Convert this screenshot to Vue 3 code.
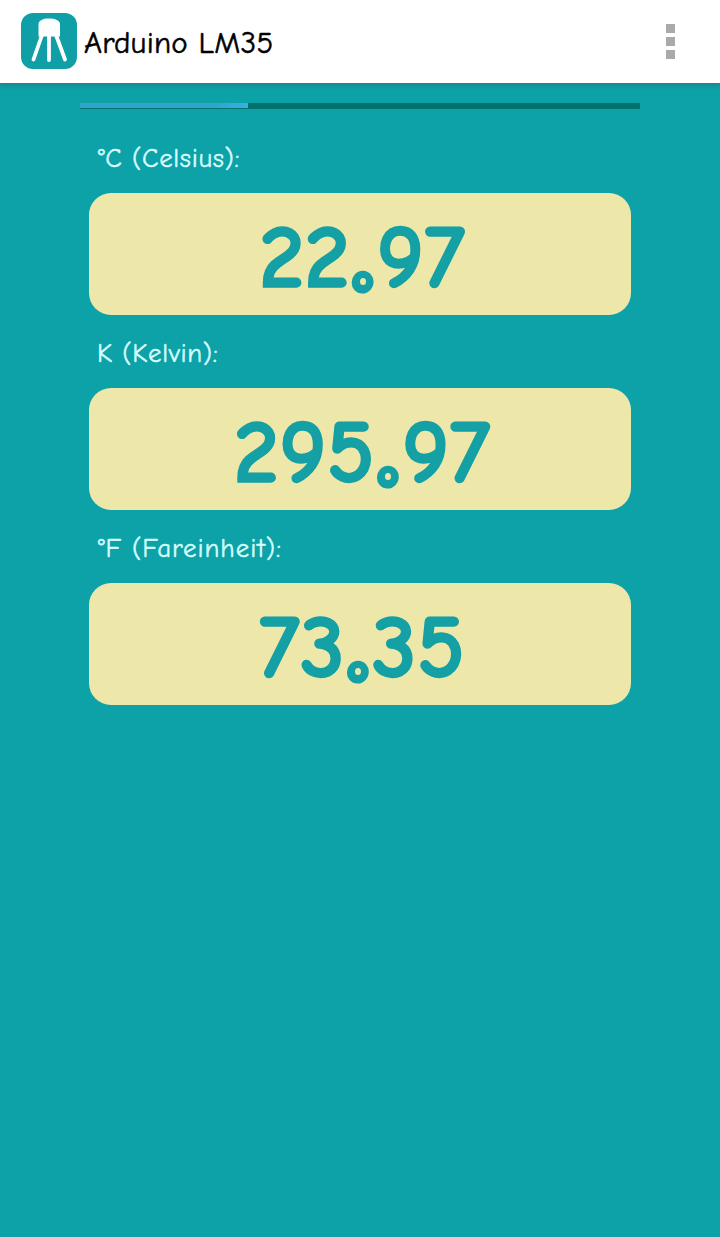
<template>
  <div class="app">
    <header class="action-bar">
      <svg class="logo" viewBox="0 0 56 56">
        <rect width="56" height="56" rx="12" fill="#109fa6" />
        <path
          d="M17.5 23.5V11C17.5 7.5 22 5.5 28 5.5S39 7.5 39 11v12.5z"
          fill="#fff"
        />
        <path
          d="M21 22L12.5 46.5M28 22V47M35 22L44 46.5"
          stroke="#fff"
          stroke-width="3.8"
          stroke-linecap="round"
        />
      </svg>
      <h1 class="title">Arduino LM35</h1>
      <div class="menu">
        <span v-for="n in 3" :key="n" class="menu-dot"></span>
      </div>
    </header>

    <main class="content">
      <div class="progress">
        <div class="progress-value" :style="{ width: progress + '%' }"></div>
      </div>

      <section v-for="item in readings" :key="item.id" class="reading">
        <p class="label" :class="item.id">{{ item.label }}</p>
        <div class="value-box">
          <span>{{ item.whole }}</span>
          <span class="point">.</span>
          <span>{{ item.decimal }}</span>
        </div>
      </section>
    </main>
  </div>
</template>

<script setup>
import { ref } from 'vue';

const progress = ref(30);

const readings = ref([
  { id: 'celsius', label: '°C (Celsius):', whole: '22', decimal: '97' },
  { id: 'kelvin', label: 'K (Kelvin):', whole: '295', decimal: '97' },
  { id: 'fahrenheit', label: '°F (Fareinheit):', whole: '73', decimal: '35' },
]);
</script>

<style>
body {
  background-color: #0da1a8;
}
</style>

<style scoped>
.app {
  min-height: 1237px;
  background-color: #0da1a8;
  font-family: 'Choco Cooky', 'Comic Sans MS', 'Comic Neue', Lato, sans-serif;
}

.action-bar {
  box-sizing: border-box;
  height: 83px;
  padding: 0 45px 1px 21px;
  display: flex;
  align-items: center;
  background-color: #fff;
  box-shadow: 0 1px 1px #397f83, 0 2px 5px rgba(20, 80, 85, 0.35);
}

.logo {
  width: 56px;
  height: 56px;
}

.title {
  margin: 0 0 0 7px;
  padding-top: 3px;
  color: #000;
  font-size: 31px;
  font-weight: 400;
  line-height: 40px;
  letter-spacing: 0.25px;
  white-space: nowrap;
  -webkit-text-stroke: 0.5px #000;
}

.menu {
  display: flex;
  flex-direction: column;
  gap: 4px;
  margin-left: auto;
}

.menu-dot {
  width: 9px;
  height: 9px;
  background-color: #aaa;
}

.content {
  padding: 20px 80px 0;
}

.progress {
  height: 6px;
  background-color: #04716f;
}

.progress-value {
  height: 5px;
  background: linear-gradient(90deg, #2fa5cb 80%, #35b2e2);
}

.reading {
  padding: 0 9px;
}

.reading:nth-of-type(1) {
  padding-top: 11px;
}

.label {
  box-sizing: border-box;
  height: 73px;
  margin: 0;
  padding: 22px 0 0 9px;
  color: #d6ffff;
  font-size: 27px;
  line-height: 34px;
  letter-spacing: 0.6px;
  white-space: nowrap;
  -webkit-text-stroke: 0.4px #d6ffff;
}

.label.kelvin {
  padding-left: 8px;
}

.label.fahrenheit {
  letter-spacing: 0.9px;
}

.value-box {
  box-sizing: border-box;
  height: 122px;
  padding: 7px 0 0 4px;
  display: flex;
  align-items: center;
  justify-content: center;
  border-radius: 22px;
  background-color: #ede8aa;
  color: #14a0a4;
  font-size: 91px;
  font-weight: 700;
  line-height: 115px;
  -webkit-text-stroke: 1.5px #14a0a4;
}

.point {
  position: relative;
  width: 27px;
  padding-top: 7px;
  text-align: center;
  font-size: 80px;
  -webkit-text-stroke-width: 13px;
}

/* small hole that makes the decimal point a ring */
.point::after {
  content: '';
  position: absolute;
  left: 10px;
  top: 81px;
  width: 6px;
  height: 7px;
  border-radius: 50%;
  background-color: #ede8aa;
}
</style>
